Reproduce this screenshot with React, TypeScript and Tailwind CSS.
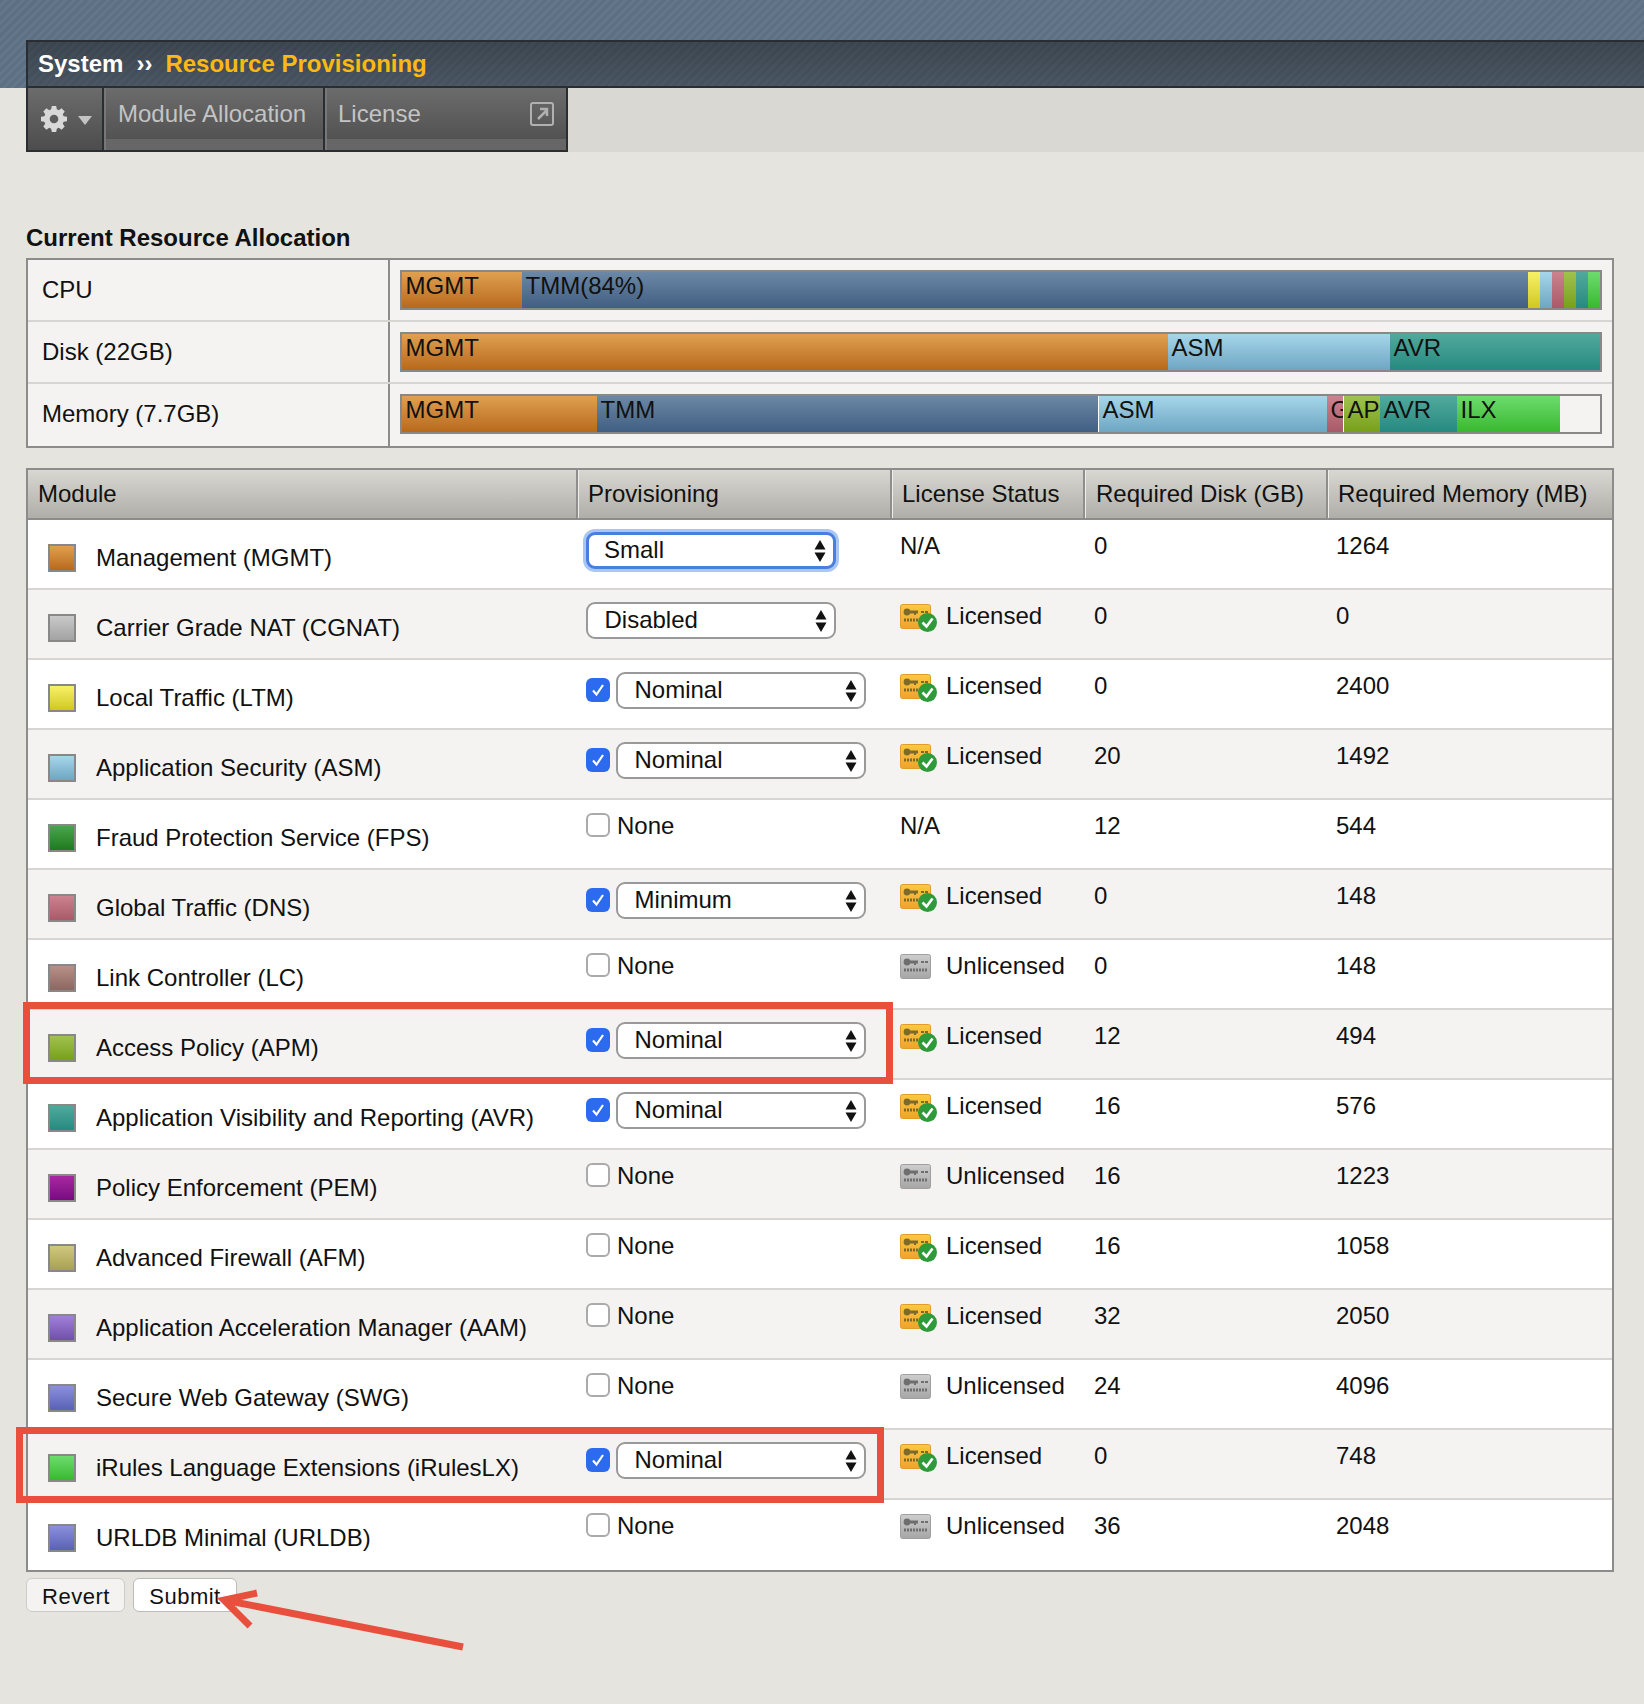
import React from "react";

const grad: Record<string, string> = {
  mgmt: "bg-gradient-to-b from-[#e0a050] to-[#b8691a]",
  gray: "bg-gradient-to-b from-[#c9c9c9] to-[#a3a3a3]",
  tmm: "bg-gradient-to-b from-[#6c88a6] to-[#415f82]",
  ltm: "bg-gradient-to-b from-[#f8f164] to-[#d0c81a]",
  asm: "bg-gradient-to-b from-[#a6d6ea] to-[#6ea6c2]",
  fps: "bg-gradient-to-b from-[#4aa54a] to-[#1e7a1e]",
  dns: "bg-gradient-to-b from-[#cc8290] to-[#a85a68]",
  lc: "bg-gradient-to-b from-[#b89088] to-[#8c6860]",
  apm: "bg-gradient-to-b from-[#a0c24e] to-[#78a018]",
  avr: "bg-gradient-to-b from-[#50a99c] to-[#258a80]",
  pem: "bg-gradient-to-b from-[#a828a0] to-[#780a80]",
  afm: "bg-gradient-to-b from-[#d0c880] to-[#a8a050]",
  aam: "bg-gradient-to-b from-[#a080d8] to-[#7050a8]",
  swg: "bg-gradient-to-b from-[#8c90dc] to-[#5a62b4]",
  ilx: "bg-gradient-to-b from-[#6cdc6c] to-[#38b82e]",
};

interface Module {
  name: string;
  color: string;
  check?: boolean;
  level: string;
  license: string;
  disk: string;
  mem: string;
}

const modules: Module[] = [
  { name: "Management (MGMT)", color: "mgmt", level: "Small", license: "N/A", disk: "0", mem: "1264" },
  { name: "Carrier Grade NAT (CGNAT)", color: "gray", level: "Disabled", license: "Licensed", disk: "0", mem: "0" },
  { name: "Local Traffic (LTM)", color: "ltm", check: true, level: "Nominal", license: "Licensed", disk: "0", mem: "2400" },
  { name: "Application Security (ASM)", color: "asm", check: true, level: "Nominal", license: "Licensed", disk: "20", mem: "1492" },
  { name: "Fraud Protection Service (FPS)", color: "fps", check: false, level: "None", license: "N/A", disk: "12", mem: "544" },
  { name: "Global Traffic (DNS)", color: "dns", check: true, level: "Minimum", license: "Licensed", disk: "0", mem: "148" },
  { name: "Link Controller (LC)", color: "lc", check: false, level: "None", license: "Unlicensed", disk: "0", mem: "148" },
  { name: "Access Policy (APM)", color: "apm", check: true, level: "Nominal", license: "Licensed", disk: "12", mem: "494" },
  { name: "Application Visibility and Reporting (AVR)", color: "avr", check: true, level: "Nominal", license: "Licensed", disk: "16", mem: "576" },
  { name: "Policy Enforcement (PEM)", color: "pem", check: false, level: "None", license: "Unlicensed", disk: "16", mem: "1223" },
  { name: "Advanced Firewall (AFM)", color: "afm", check: false, level: "None", license: "Licensed", disk: "16", mem: "1058" },
  { name: "Application Acceleration Manager (AAM)", color: "aam", check: false, level: "None", license: "Licensed", disk: "32", mem: "2050" },
  { name: "Secure Web Gateway (SWG)", color: "swg", check: false, level: "None", license: "Unlicensed", disk: "24", mem: "4096" },
  { name: "iRules Language Extensions (iRulesLX)", color: "ilx", check: true, level: "Nominal", license: "Licensed", disk: "0", mem: "748" },
  { name: "URLDB Minimal (URLDB)", color: "swg", check: false, level: "None", license: "Unlicensed", disk: "36", mem: "2048" },
];

function Seg(props: { c: string; w: string; label?: string }) {
  return (
    <div className={`${grad[props.c]} ${props.w} h-full shrink-0 overflow-hidden whitespace-nowrap pl-[3.5px] text-[24px] leading-[28px] text-[#111]`}>
      {props.label}
    </div>
  );
}

function AllocRow(props: { label: string; last?: boolean; children: React.ReactNode }) {
  return (
    <div className={`flex h-[62px] ${props.last ? "" : "border-b-2 border-[#d6d5d1]"}`}>
      <div className="w-[362px] shrink-0 border-r-2 border-[#8c8c8c] pl-[14px] pt-[16px] text-[24px] leading-[28px]">{props.label}</div>
      <div className="pl-[10px] pt-[10px]">
        <div className="flex h-[40px] w-[1202px] border-2 border-[#888] bg-[#f4f3f1]">{props.children}</div>
      </div>
    </div>
  );
}

function SelectBox(props: { value: string; focus?: boolean }) {
  return (
    <div className={`mt-[1px] flex h-[37px] w-[250px] items-center justify-between rounded-[9px] bg-white pr-[7px] text-[24px] ${props.focus ? "border-[3px] border-[#4a7fe0] pl-[15px] shadow-[0_0_0_3px_#a9c6f5]" : "border-2 border-[#999] pl-[16.5px]"}`}>
      <span className="-mt-[2px]">{props.value}</span>
      <svg width="12" height="24" viewBox="0 0 12 24">
        <path d="M6 1 L11.5 10.5 H0.5 Z M6 23 L0.5 13.5 H11.5 Z" fill="#111" />
      </svg>
    </div>
  );
}

function CheckBox(props: { on: boolean }) {
  if (!props.on) {
    return <div className="h-[24px] w-[24px] rounded-[6px] border-2 border-[#aaa] bg-white" />;
  }
  return (
    <div className="flex h-[24px] w-[24px] items-center justify-center rounded-[6px] bg-[#2c6bf0]">
      <svg width="16" height="16" viewBox="0 0 16 16">
        <path d="M3 8.5 L6.5 12.5 L13 3" fill="none" stroke="#fff" strokeWidth="2.2" />
      </svg>
    </div>
  );
}

function LicenseIcon(props: { ok: boolean }) {
  const id = props.ok ? "lic-y" : "lic-g";
  const ink = props.ok ? "#7d6a2a" : "#6e6e6e";
  return (
    <svg width="37" height="29" viewBox="0 0 37 29" className="shrink-0 blur-[0.4px]">
      <defs>
        <linearGradient id={id} x1="0" y1="0" x2="0" y2="1">
          <stop offset="0" stopColor={props.ok ? "#fbc940" : "#cdcdcd"} />
          <stop offset="1" stopColor={props.ok ? "#f0a32c" : "#a6a6a6"} />
        </linearGradient>
      </defs>
      <rect x="0.5" y="0.5" width="30" height="24" rx="2" fill={`url(#${id})`} stroke={props.ok ? "#e39c28" : "#a0a0a0"} />
      <g fill={ink}>
        <circle cx="7" cy="8" r="3.4" />
        <rect x="9" y="6.5" width="9" height="3" />
        <rect x="14" y="9" width="2" height="2" />
        <rect x="21" y="7" width="3" height="2" />
        <rect x="25" y="7" width="3" height="2" />
      </g>
      <path d="M4 16 H27" stroke={ink} strokeWidth="3" strokeDasharray="2 1" />
      {props.ok && (
        <g>
          <circle cx="27.5" cy="18.5" r="9.5" fill="#2f9a3a" />
          <path d="M22.5 18.5 L26.5 22.5 L32.5 14.5" fill="none" stroke="#fff" strokeWidth="2.6" />
        </g>
      )}
    </svg>
  );
}

function Row(props: { m: Module; odd: boolean }) {
  const m = props.m;
  return (
    <div className={`flex h-[70px] border-b-2 border-[#d6d5d1] text-[24px] leading-[28px] last:border-b-0 ${props.odd ? "bg-[#f4f3f1]" : "bg-white"}`}>
      <div className="flex w-[549px] shrink-0 items-start pl-[20px] pt-[24px]">
        <div className={`${grad[m.color]} h-[28px] w-[28px] shrink-0 border-2 border-[#888]`} />
        <span className="ml-[20px] whitespace-nowrap">{m.name}</span>
      </div>
      <div className="flex w-[314px] shrink-0 items-start gap-[6px] pl-[9px] pt-[11px]">
        {m.check !== undefined && (
          <div className={m.check ? "pt-[7px]" : "pt-[2px]"}>
            <CheckBox on={m.check} />
          </div>
        )}
        {m.level === "None" ? (
          <span className="pl-[1px] pt-[1px]">None</span>
        ) : (
          <SelectBox value={m.level} focus={m.level === "Small"} />
        )}
      </div>
      <div className="flex w-[193px] shrink-0 items-start gap-[9px] pl-[9px] pt-[12px]">
        {m.license !== "N/A" && (
          <div className="pt-[2px]">
            <LicenseIcon ok={m.license === "Licensed"} />
          </div>
        )}
        <span>{m.license}</span>
      </div>
      <div className="w-[243px] shrink-0 pl-[10px] pt-[12px]">{m.disk}</div>
      <div className="pl-[9px] pt-[12px]">{m.mem}</div>
    </div>
  );
}

function HeadCell(props: { w: string; label: string; pl?: string; last?: boolean }) {
  return (
    <div className={`${props.w} ${props.pl ?? "pl-[10px]"} h-full whitespace-nowrap pt-[10px] ${props.last ? "grow" : "shrink-0 border-r-2 border-[#8f8e8a] shadow-[1px_0_0_#efeeea]"}`}>
      {props.label}
    </div>
  );
}

export default function App() {
  return (
    <div className="relative min-h-[1704px] overflow-hidden bg-[#e5e4df] font-['Liberation_Sans',Arial,sans-serif] text-[#111]">
      {/* top band */}
      <div className="h-[88px] bg-[#5f7184] bg-[repeating-linear-gradient(135deg,#5d6f82_0px,#5d6f82_3px,#64768a_3px,#64768a_6px)] pt-[40px] pl-[26px]">
        <div className="flex h-[48px] items-center gap-[13px] border-y-2 border-l-2 border-[#2a2e32] bg-[repeating-linear-gradient(135deg,rgba(255,255,255,0)_0px,rgba(255,255,255,0)_3px,rgba(255,255,255,0.025)_3px,rgba(255,255,255,0.025)_6px),linear-gradient(#3a444e,#47535f)] pl-[10px] text-[24px] font-bold text-white">
          <span>System</span>
          <span>››</span>
          <span className="text-[#fdb813]">Resource Provisioning</span>
        </div>
      </div>

      {/* tabs */}
      <div className="flex h-[64px] pl-[26px]">
        <div className="flex h-[64px] shrink-0 border-x-2 border-b-2 border-[#2a2e32] text-[24px] text-[#c4c4c4]">
          <div className="flex w-[76px] items-center border-r-2 border-[#2a2e32] bg-gradient-to-b from-[#6c6c6c] to-[#4d4d4d] pb-[1px] pl-[13px]">
            <svg width="26" height="26" viewBox="0 0 24 24" fill="#d8d8d8" className="blur-[0.4px]">
              <path fillRule="evenodd" d="M10 0h4l.6 3.1 1.8.8L19 2.1 21.9 5l-1.8 2.6.8 1.8L24 10v4l-3.1.6-.8 1.8 1.8 2.6-2.9 2.9-2.6-1.8-1.8.8L14 24h-4l-.6-3.1-1.8-.8L5 21.9 2.1 19l1.8-2.6-.8-1.8L0 14v-4l3.1-.6.8-1.8L2.1 5 5 2.1l2.6 1.8 1.8-.8L10 0zm2 8a4 4 0 1 0 0 8 4 4 0 0 0 0-8z" />
            </svg>
            <svg width="14" height="9" viewBox="0 0 14 9" className="ml-[11px] mt-[4px]">
              <path d="M0 0 H14 L7 9 Z" fill="#c4c4c4" />
            </svg>
          </div>
          <div className="w-[221px] border-l-2 border-r-2 border-l-[#777] border-r-[#2a2e32] bg-[linear-gradient(#6c6c6c,#525252_82%,#666_82%)] pl-[12px] pt-[8px]">Module Allocation</div>
          <div className="flex w-[241px] items-start justify-between border-l-2 border-[#777] bg-[linear-gradient(#6c6c6c,#525252_82%,#666_82%)] pl-[11px] pr-[11px] pt-[8px]">
            <span>License</span>
            <svg width="26" height="26" viewBox="0 0 26 26" className="mt-[5px]">
              <rect x="2" y="2" width="22" height="22" rx="2" fill="none" stroke="#b0b0b0" strokeWidth="2" />
              <path d="M9 18 L18 9 M11 8 H18 V15" fill="none" stroke="#b0b0b0" strokeWidth="2.5" />
            </svg>
          </div>
        </div>
        <div className="grow bg-[#d9d8d2]" />
      </div>

      <div className="pl-[26px]">
        <div className="pt-[72px] text-[24px] font-bold leading-[28px]">Current Resource Allocation</div>

        {/* allocation */}
        <div className="mt-[6px] w-[1588px] border-2 border-[#8c8c8c] bg-[#f4f3f1]">
          <AllocRow label="CPU">
            <Seg c="mgmt" w="w-[120px]" label="MGMT" />
            <Seg c="tmm" w="w-[1006px]" label="TMM(84%)" />
            <Seg c="ltm" w="w-[12px]" />
            <Seg c="asm" w="w-[12px]" />
            <Seg c="dns" w="w-[12px]" />
            <Seg c="apm" w="w-[12px]" />
            <Seg c="avr" w="w-[12px]" />
            <Seg c="ilx" w="w-[12px]" />
          </AllocRow>
          <AllocRow label="Disk (22GB)">
            <Seg c="mgmt" w="w-[766px]" label="MGMT" />
            <Seg c="asm" w="w-[222px]" label="ASM" />
            <Seg c="avr" w="w-[210px]" label="AVR" />
          </AllocRow>
          <AllocRow label="Memory (7.7GB)" last>
            <Seg c="mgmt" w="w-[195px]" label="MGMT" />
            <Seg c="tmm" w="w-[501px]" label="TMM" />
            <div className="w-[1px] shrink-0 bg-white" />
            <Seg c="asm" w="w-[228px]" label="ASM" />
            <Seg c="dns" w="w-[16px]" label="GTM" />
            <div className="w-[1px] shrink-0 bg-white" />
            <Seg c="apm" w="w-[36px]" label="APM" />
            <Seg c="avr" w="w-[77px]" label="AVR" />
            <Seg c="ilx" w="w-[103px]" label="ILX" />
          </AllocRow>
        </div>

        {/* modules */}
        <div className="mt-[20px] w-[1588px] border-2 border-[#8c8c8c] bg-white">
          <div className="flex h-[50px] border-b-2 border-[#8c8c8c] bg-gradient-to-b from-[#d8d7d1] to-[#b0aea8] text-[24px] leading-[28px]">
            <HeadCell w="w-[550px]" label="Module" />
            <HeadCell w="w-[314px]" label="Provisioning" />
            <HeadCell w="w-[193px]" label="License Status" />
            <HeadCell w="w-[243px]" pl="pl-[11px]" label="Required Disk (GB)" />
            <HeadCell w="" label="Required Memory (MB)" last />
          </div>
          {modules.map((m, i) => (
            <Row key={m.name} m={m} odd={i % 2 === 1} />
          ))}
        </div>

        <div className="mt-[6px] flex gap-[8px] text-[22px]">
          <button className="h-[34px] w-[99px] rounded-[6px] border border-[#ccc] bg-[#f4f3f1] pl-[1px] pt-[1px] tracking-[0.5px]">Revert</button>
          <button className="h-[34px] w-[104px] rounded-[6px] border border-[#bbb] bg-white pt-[1px] tracking-[0.5px]">Submit</button>
        </div>
      </div>

      {/* annotations */}
      <div className="absolute left-[23px] top-[1002px] h-[82px] w-[870px] border-[7px] border-[#e94f3d]" />
      <div className="absolute left-[16px] top-[1427px] h-[76px] w-[868px] border-[7px] border-[#e94f3d]" />
      <svg className="absolute left-[210px] top-[1581px]" width="260" height="80" viewBox="0 0 260 80">
        <path d="M253 66 L14 19 M47 12 L14 19 L40 45" fill="none" stroke="#e94f3d" strokeWidth="7" />
      </svg>
    </div>
  );
}
